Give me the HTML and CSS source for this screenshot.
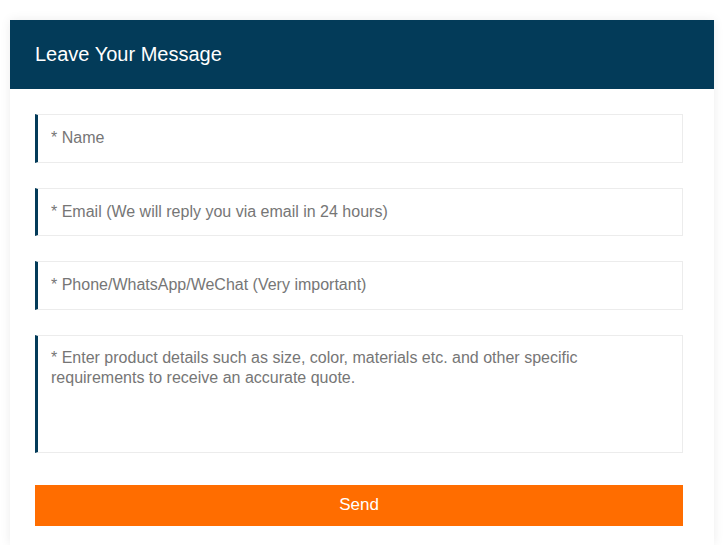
FILE: index.html
```html
<!DOCTYPE html>
<html lang="en">
<head>
    <meta charset="UTF-8">
    <meta name="viewport" content="width=device-width, initial-scale=1.0">
    <title>Leave Your Message</title>
    <link rel="stylesheet" href="styles.css">
</head>
<body>
    <div class="message-box">
        <div class="message-head">Leave Your Message</div>
        <form class="message-form">
            <input class="field" type="text" placeholder="* Name">
            <input class="field" type="text" placeholder="* Email (We will reply you via email in 24 hours)">
            <input class="field" type="text" placeholder="* Phone/WhatsApp/WeChat (Very important)">
            <textarea class="field field-area" placeholder="* Enter product details such as size, color, materials etc. and other specific requirements to receive an accurate quote."></textarea>
            <button class="send-btn" type="button">Send</button>
        </form>
    </div>
</body>
</html>
```

FILE: styles.css
```css
body {
    margin: 0;
    padding: 20px 10px 0 10px;
    background: #fff;
    font-family: 'Liberation Sans', Arial, sans-serif;
}
.message-box {
    background: #fff;
    box-shadow: 0 0 10px rgba(0, 0, 0, 0.08);
}
.message-head {
    background-color: #033b59;
    color: #fff;
    height: 69px;
    line-height: 68px;
    padding-left: 25px;
    font-size: 20px;
}
.message-form {
    display: flex;
    flex-direction: column;
    padding: 25px 31px 19px 25px;
}
.field {
    box-sizing: border-box;
    height: 48.6px;
    margin: 0 0 25px 0;
    padding: 0 13px;
    border: 1px solid #ececec;
    border-left: 3px solid #033b59;
    font-family: inherit;
    font-size: 16px;
    color: #555;
    outline: none;
}
.field::placeholder {
    color: #767676;
}
.field-area {
    height: 118.4px;
    margin-bottom: 31.8px;
    padding-top: 12px;
    line-height: 20px;
    resize: none;
}
.send-btn {
    height: 41px;
    border: none;
    background-color: #ff6d00;
    color: #fff;
    font-family: inherit;
    font-size: 17px;
    cursor: pointer;
}
```
